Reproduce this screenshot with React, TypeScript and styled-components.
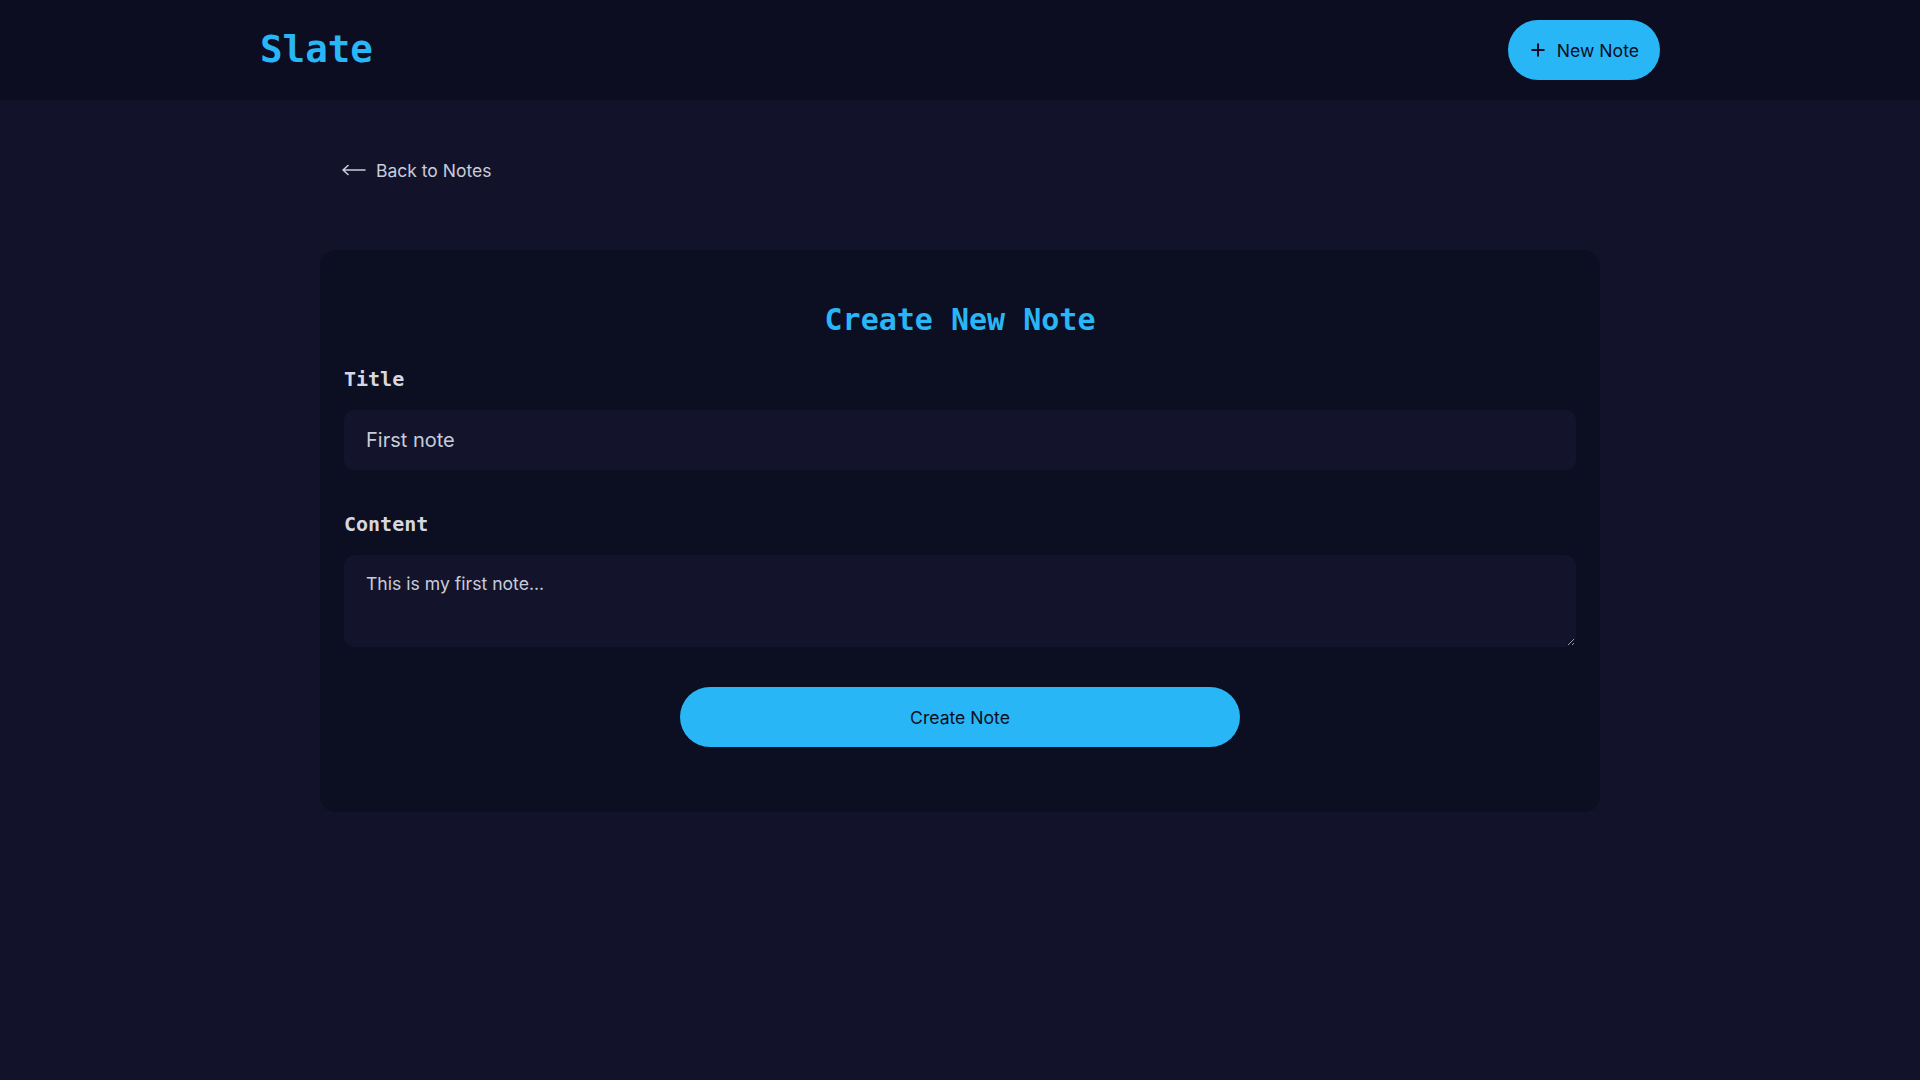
import React from "react";
import styled, { createGlobalStyle } from "styled-components";

const GlobalStyle = createGlobalStyle`
  html, body {
    margin: 0;
    padding: 0;
    background: #12132b;
  }
  body {
    font-family: Inter, "Noto Sans", sans-serif;
    color: #c9ccd8;
    min-height: 1080px;
  }
  * { box-sizing: border-box; }
`;

const Page = styled.div`
  min-height: 1080px;
  background: #12132b;
`;

const Header = styled.header`
  height: 100px;
  background: #0c0d21;
  display: flex;
  justify-content: center;
`;

const HeaderInner = styled.div`
  width: 1400px;
  display: flex;
  align-items: center;
  justify-content: space-between;
`;

const Logo = styled.h1`
  margin: 0;
  font-family: "DejaVu Sans Mono", monospace;
  font-weight: 700;
  font-size: 37.5px;
  line-height: 1;
  color: #29b6f6;
`;

const PillButton = styled.button`
  height: 60px;
  display: inline-flex;
  align-items: center;
  gap: 12px;
  padding: 0 21px 0 23px;
  border: none;
  border-radius: 30px;
  background: #29b6f6;
  color: #0c0e21;
  font-family: Inter, "Noto Sans", sans-serif;
  font-size: 17.6px;
  cursor: pointer;
`;

const Main = styled.main`
  width: 1280px;
  margin: 0 auto;
  padding-top: 56px;
`;

const BackLink = styled.a`
  display: inline-flex;
  align-items: center;
  gap: 10px;
  margin-left: 22px;
  height: 28px;
  font-size: 17.5px;
  color: #c9ccd8;
  text-decoration: none;
  cursor: pointer;
`;

const Card = styled.section`
  margin-top: 66px;
  background: #0c0e21;
  border-radius: 16px;
  padding: 47px 24px 65px;
  display: flex;
  flex-direction: column;
`;

const CardTitle = styled.h2`
  margin: 0 0 22px;
  text-align: center;
  font-family: "DejaVu Sans Mono", monospace;
  font-weight: 700;
  font-size: 30px;
  line-height: 45px;
  color: #29b6f6;
`;

const Field = styled.div<{ $spaced?: boolean }>`
  display: flex;
  flex-direction: column;
  margin-top: ${(p) => (p.$spaced ? "39px" : "0")};
`;

const Label = styled.label`
  font-family: "DejaVu Sans Mono", monospace;
  font-weight: 700;
  font-size: 20px;
  line-height: 30px;
  color: #d6d7e0;
  margin-bottom: 16px;
`;

const TextInput = styled.input`
  height: 60px;
  padding: 0 22px;
  border: none;
  border-radius: 10px;
  background: #13142c;
  color: #c9ccd8;
  font-family: Inter, "Noto Sans", sans-serif;
  font-size: 20px;
  outline: none;
`;

const TextArea = styled.textarea`
  height: 92px;
  padding: 15px 21px;
  border: 1px solid #13142c;
  border-radius: 10px;
  background: #13142c;
  color: #c9ccd8;
  font-family: Inter, "Noto Sans", sans-serif;
  font-size: 17.6px;
  line-height: 26px;
  resize: vertical;
  outline: none;
  color-scheme: dark;

  &::placeholder {
    color: #c9ccd8;
    opacity: 1;
  }
`;

const SubmitButton = styled.button`
  align-self: center;
  margin-top: 40px;
  width: 560px;
  height: 60px;
  border: none;
  border-radius: 30px;
  background: #29b6f6;
  color: #0c0e21;
  font-family: Inter, "Noto Sans", sans-serif;
  font-size: 17.6px;
  cursor: pointer;
`;

const PlusIcon = () => (
  <svg width="14" height="14" viewBox="0 0 14 14" fill="none">
    <path d="M7 0.5V13.5M0.5 7H13.5" stroke="#0c0e21" strokeWidth="2" />
  </svg>
);

const ArrowIcon = () => (
  <svg width="24" height="12" viewBox="0 0 24 12" fill="none">
    <path
      d="M1 6H23M1 6L6 1.5M1 6L6 10.5"
      stroke="#c9ccd8"
      strokeWidth="1.6"
      strokeLinecap="round"
      strokeLinejoin="round"
    />
  </svg>
);

export default function App() {
  return (
    <Page>
      <GlobalStyle />
      <Header>
        <HeaderInner>
          <Logo>Slate</Logo>
          <PillButton>
            <PlusIcon />
            New Note
          </PillButton>
        </HeaderInner>
      </Header>
      <Main>
        <BackLink>
          <ArrowIcon />
          Back to Notes
        </BackLink>
        <Card>
          <CardTitle>Create New Note</CardTitle>
          <Field>
            <Label htmlFor="title">Title</Label>
            <TextInput id="title" defaultValue="First note" />
          </Field>
          <Field $spaced>
            <Label htmlFor="content">Content</Label>
            <TextArea id="content" placeholder="This is my first note..." />
          </Field>
          <SubmitButton>Create Note</SubmitButton>
        </Card>
      </Main>
    </Page>
  );
}
